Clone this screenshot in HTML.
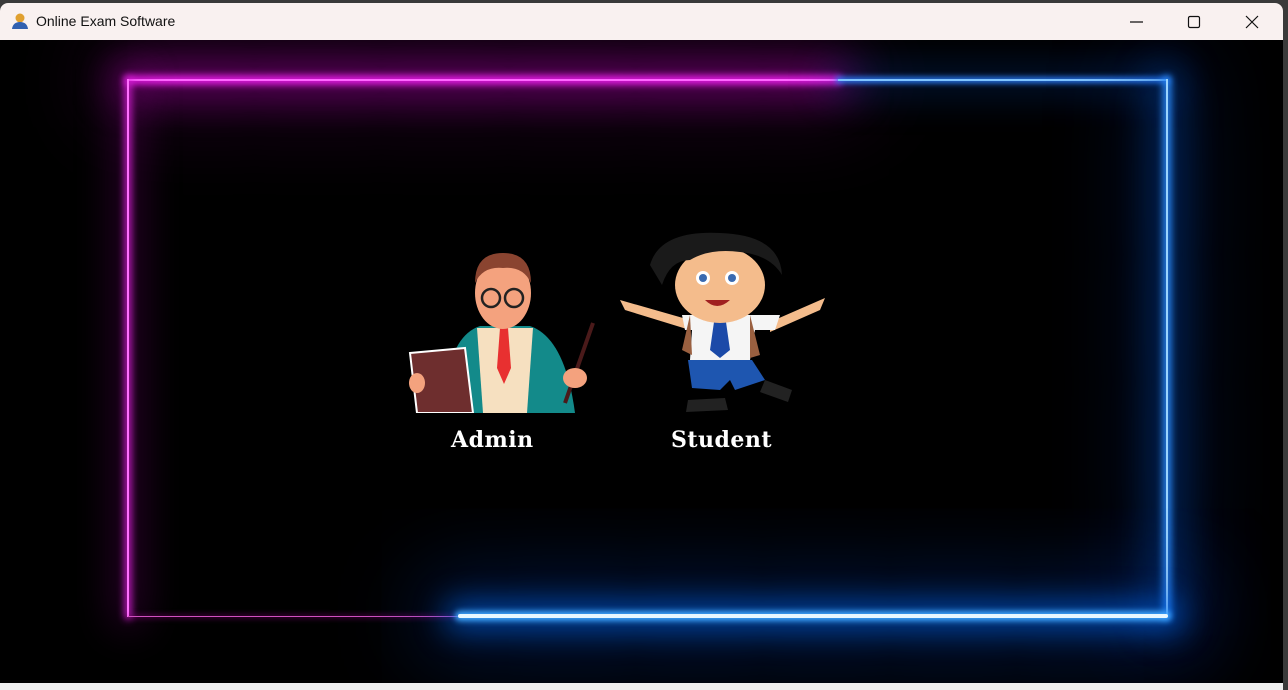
<!DOCTYPE html>
<html><head><meta charset="utf-8"><style>
*{margin:0;padding:0;box-sizing:border-box}
html,body{width:1288px;height:690px;overflow:hidden;background:#3a3a3a;font-family:"Liberation Sans",sans-serif}
#win{position:absolute;left:0;top:3px;width:1283px;height:687px;background:#000;border-radius:8px 8px 0 0;overflow:hidden}
#title{position:absolute;left:0;top:0;width:100%;height:37px;background:#f9f1f0;font-size:14px;color:#111;z-index:10}
#title span{position:absolute;left:36px;top:10px}
#bottom{position:absolute;left:0;top:680px;width:100%;height:10px;background:#efefef;z-index:10}
.l{position:absolute}
.lab{position:absolute;top:424px;font-family:"DejaVu Serif","Liberation Serif",serif;font-weight:bold;font-size:22px;color:#fff;letter-spacing:0.5px}
</style></head><body>
<div id="win">
<div id="title">
<svg style="position:absolute;left:11px;top:9px" width="18" height="18" viewBox="0 0 18 18"><circle cx="9" cy="6" r="4.5" fill="#e0a030"/><path d="M1 17 Q2 10 9 10 Q16 10 17 17Z" fill="#3060b0"/></svg>
<span>Online Exam Software</span>
<svg style="position:absolute;left:1128px;top:10px" width="140" height="18" viewBox="0 0 140 18">
<path d="M2 9H15" stroke="#111" stroke-width="1.2"/>
<rect x="60.5" y="3.5" width="11" height="11" rx="1.5" fill="none" stroke="#111" stroke-width="1.2"/>
<path d="M118 3L130 15M130 3L118 15" stroke="#111" stroke-width="1.2"/></svg>
</div>
<div class="l" style="left:128px;top:76px;width:710px;height:2px;background:#ff66ff;box-shadow:0 0 8px 3px #ff20ff,0 0 40px 12px rgba(200,0,200,.55),0 0 90px 30px rgba(120,0,120,.35)"></div>
<div class="l" style="left:838px;top:76px;width:330px;height:2px;background:#7fc4ff;box-shadow:0 0 6px 2px #2a7fff,0 0 40px 10px rgba(0,80,200,.35)"></div>
<div class="l" style="left:127px;top:76px;width:2px;height:538px;background:#ff70ff;box-shadow:0 0 8px 2px #e020e0,0 0 40px 10px rgba(160,0,160,.35)"></div>
<div class="l" style="left:1166px;top:76px;width:2px;height:538px;background:#9ad4ff;box-shadow:0 0 8px 3px #2a8cff,0 0 40px 12px rgba(0,90,220,.45),0 0 90px 30px rgba(0,50,140,.3)"></div>
<div class="l" style="left:128px;top:613px;width:330px;height:1px;background:#d050c0;box-shadow:0 0 6px 1px rgba(180,0,160,.5)"></div>
<div class="l" style="left:458px;top:611px;width:710px;height:4px;border-radius:2px;background:#e8f8ff;box-shadow:0 0 6px 3px #40a8ff,0 0 30px 12px rgba(0,110,255,.6),0 0 90px 35px rgba(0,60,170,.4)"></div>
<svg class="l" style="left:405px;top:245px" width="195" height="165" viewBox="0 0 195 165">
<path d="M40 165 Q40 90 75 78 L125 78 Q160 90 170 165Z" fill="#138a8a"/>
<path d="M72 80 L128 80 L122 165 L78 165Z" fill="#f6e0c0"/>
<path d="M95 80 L103 80 L106 120 L99 136 L92 120Z" fill="#e83030"/>
<ellipse cx="98" cy="45" rx="28" ry="36" fill="#f4a27e"/>
<path d="M70 35 Q70 5 98 5 Q126 5 126 35 Q118 18 98 20 Q78 18 70 35Z" fill="#8a4430"/>
<circle cx="86" cy="50" r="9" fill="none" stroke="#222" stroke-width="2.5"/><circle cx="109" cy="50" r="9" fill="none" stroke="#222" stroke-width="2.5"/>
<path d="M188 75 L160 155" stroke="#4a1a1a" stroke-width="4"/>
<path d="M5 105 L60 100 L68 165 L12 165Z" fill="#6e2e2e" stroke="#fff" stroke-width="2"/>
<ellipse cx="170" cy="130" rx="12" ry="10" fill="#f4a27e"/>
<ellipse cx="12" cy="135" rx="8" ry="10" fill="#f4a27e"/>
</svg>
<div class="lab" style="left:451px">Admin</div>
<svg class="l" style="left:620px;top:227px" width="205" height="185" viewBox="0 0 205 185">
<path d="M0 70 L70 90 L70 100 L5 80Z" fill="#f4bc8c"/>
<path d="M205 68 L150 92 L150 102 L200 80Z" fill="#f4bc8c"/>
<path d="M62 85 L160 85 L155 100 L135 100 L130 130 L70 130 L72 100 L65 100Z" fill="#f5f5f5"/>
<path d="M70 85 L62 120 L72 125Z" fill="#9a6040"/><path d="M130 85 L140 125 L130 128Z" fill="#9a6040"/>
<path d="M95 85 L105 85 L110 120 L100 128 L90 120Z" fill="#1c4aa8"/>
<path d="M68 130 L132 130 L145 150 L115 160 L110 150 L100 160 L72 158Z" fill="#1e56b0"/>
<path d="M68 170 L105 168 L108 180 L66 182Z" fill="#222"/>
<path d="M145 150 L172 160 L168 172 L140 162Z" fill="#222"/>
<ellipse cx="100" cy="55" rx="45" ry="38" fill="#f4bc8c"/>
<path d="M30 35 Q40 0 100 3 Q160 5 162 45 Q150 25 120 22 Q90 18 70 30 Q50 30 42 55Z" fill="#1a1a1a"/>
<circle cx="83" cy="48" r="7" fill="#fff"/><circle cx="83" cy="48" r="4" fill="#3a6ab0"/>
<circle cx="112" cy="48" r="7" fill="#fff"/><circle cx="112" cy="48" r="4" fill="#3a6ab0"/>
<path d="M85 70 Q97 82 110 70Z" fill="#a02020"/>
</svg>
<div class="lab" style="left:671px">Student</div>
<div id="bottom"></div>
</div>
</body></html>
